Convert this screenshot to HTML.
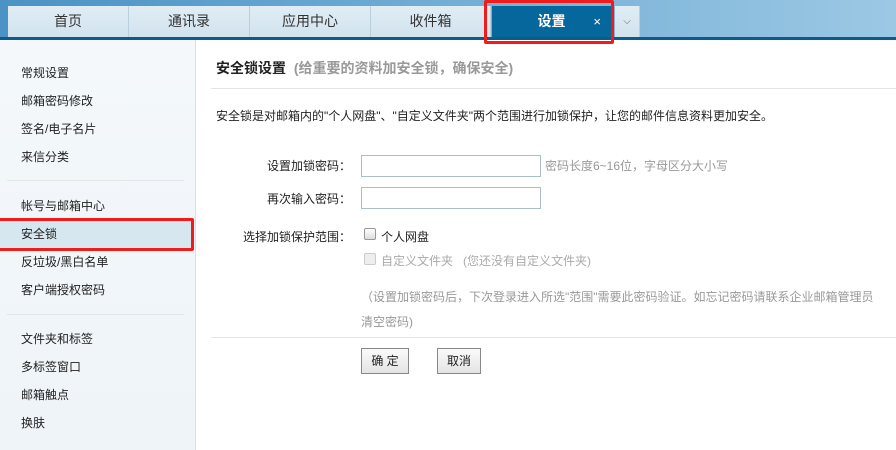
<!DOCTYPE html>
<html><head><meta charset="utf-8"><style>
*{margin:0;padding:0;box-sizing:border-box}
body{width:896px;height:450px;overflow:hidden;background:#fff;font-family:"Liberation Sans","Noto Sans CJK SC",sans-serif;font-size:12px;color:#222;position:relative}
.top{position:absolute;left:0;top:0;width:896px;height:40px;background:linear-gradient(90deg,#4c92c4,#7ab3d8 60%,#9cc8e4);border-bottom:3px solid #0b5c8a}
.tab{position:absolute;top:6px;height:31px;background:linear-gradient(#e0edf5,#d2e3ee);border-right:1px solid #b9cfdc;text-align:center;line-height:31px;font-size:14px;color:#333}
.tab.act{background:#06679c;color:#fff;font-weight:bold}
.red{position:absolute;border:3px solid #f01c1c;border-radius:2px}
.side{position:absolute;left:0;top:40px;width:196px;height:410px;background:linear-gradient(#f4f8fb,#eef4f8);border-right:1px solid #d9dfe3}
.si{position:absolute;left:21px;font-size:12px;color:#222}
.hr{position:absolute;height:1px;background:#e3e6e8}
.t{position:absolute;white-space:nowrap}
.inp{position:absolute;left:361px;width:180px;height:22px;border:1px solid #a9bfc4;background:#fff}
.cb{position:absolute;left:364px;width:12px;height:12px;border:1px solid #999;border-radius:2px;background:linear-gradient(#fff,#ddd)}
.btn{position:absolute;top:348px;height:26px;border:1px solid #888;background:linear-gradient(#fafafa,#e4e4e4);text-align:center;line-height:24px;font-size:12px}
</style></head><body>
<div class="top">
<div class="tab" style="left:8px;width:121px">首页</div>
<div class="tab" style="left:129px;width:121px">通讯录</div>
<div class="tab" style="left:250px;width:121px">应用中心</div>
<div class="tab" style="left:371px;width:120px">收件箱</div>
<div class="tab act" style="left:492px;width:120px">设置<span style="position:absolute;right:10px;font-size:13px;font-weight:normal">×</span></div>
<div class="tab" style="left:615px;width:25px;font-size:10px;color:#666">⌵</div>
</div>
<div class="red" style="left:484px;top:0;width:130px;height:44px"></div>
<div class="side">
<div class="si" style="top:24px">常规设置</div>
<div class="si" style="top:52px">邮箱密码修改</div>
<div class="si" style="top:80px">签名/电子名片</div>
<div class="si" style="top:108px">来信分类</div>
<div class="hr" style="left:7px;top:140px;width:177px"></div>
<div class="si" style="top:157px">帐号与邮箱中心</div>
<div style="position:absolute;left:0;top:179px;width:193px;height:29px;background:#d6e7ef"></div>
<div class="si" style="top:185px">安全锁</div>
<div class="si" style="top:213px">反垃圾/黑白名单</div>
<div class="si" style="top:241px">客户端授权密码</div>
<div class="hr" style="left:7px;top:274px;width:177px"></div>
<div class="si" style="top:290px">文件夹和标签</div>
<div class="si" style="top:318px">多标签窗口</div>
<div class="si" style="top:346px">邮箱触点</div>
<div class="si" style="top:374px">换肤</div>
</div>
<div class="red" style="left:-3px;top:218px;width:197px;height:33px"></div>
<div class="t" style="left:216px;top:58px;font-size:14px;font-weight:bold">安全锁设置 <span style="color:#999;margin-left:4px">(给重要的资料加安全锁，确保安全)</span></div>
<div class="hr" style="left:211px;top:88px;width:685px"></div>
<div class="t" style="left:216px;top:107px">安全锁是对邮箱内的"个人网盘"、"自定义文件夹"两个范围进行加锁保护，让您的邮件信息资料更加安全。</div>
<div class="t" style="left:267px;top:157px">设置加锁密码：</div>
<div class="inp" style="top:155px"></div>
<div class="t" style="left:545px;top:157px;color:#999">密码长度6~16位，字母区分大小写</div>
<div class="t" style="left:267px;top:190px">再次输入密码：</div>
<div class="inp" style="top:187px"></div>
<div class="t" style="left:243px;top:228px">选择加锁保护范围：</div>
<div class="cb" style="top:228px"></div>
<div class="t" style="left:381px;top:228px">个人网盘</div>
<div class="cb" style="top:253px;border-color:#ccc;background:#eee"></div>
<div class="t" style="left:381px;top:252px;color:#aaa">自定义文件夹 &nbsp;&nbsp;(您还没有自定义文件夹)</div>
<div class="t" style="left:361px;top:288px;color:#999">（设置加锁密码后，下次登录进入所选"范围"需要此密码验证。如忘记密码请联系企业邮箱管理员</div>
<div class="t" style="left:361px;top:313px;color:#999">清空密码)</div>
<div class="hr" style="left:211px;top:337px;width:685px"></div>
<div class="btn" style="left:361px;width:48px">确 定</div>
<div class="btn" style="left:437px;width:44px">取消</div>
</body></html>
